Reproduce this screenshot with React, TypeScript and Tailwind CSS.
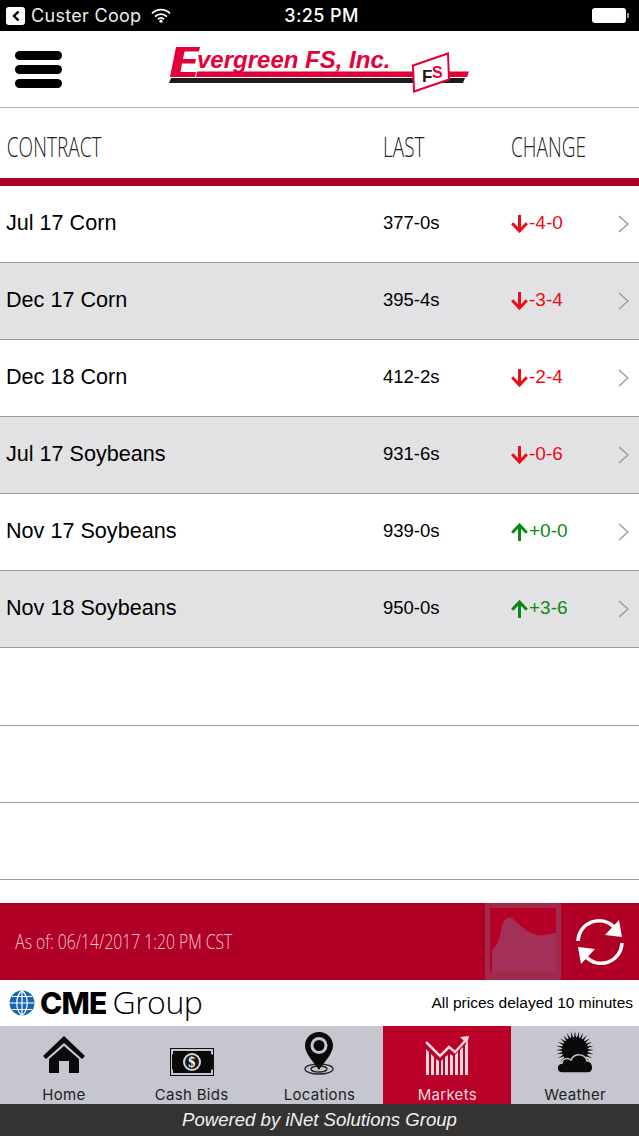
const rows = [
  { name: 'Jul 17 Corn', last: '377-0s', change: '-4-0', up: false },
  { name: 'Dec 17 Corn', last: '395-4s', change: '-3-4', up: false },
  { name: 'Dec 18 Corn', last: '412-2s', change: '-2-4', up: false },
  { name: 'Jul 17 Soybeans', last: '931-6s', change: '-0-6', up: false },
  { name: 'Nov 17 Soybeans', last: '939-0s', change: '+0-0', up: true },
  { name: 'Nov 18 Soybeans', last: '950-0s', change: '+3-6', up: true }
];

const StatusBar = () => (
  <div className="flex h-[31px] items-center justify-between bg-black pl-[6px] pr-[10px] font-['Inter',sans-serif] text-white">
    <div className="flex w-[200px] items-center">
      <div className="flex h-[18px] w-[19px] items-center justify-center rounded-[3px] bg-white">
        <svg width="10" height="12" viewBox="0 0 10 12">
          <path d="M7.5 1.5 3 6l4.500 4.500" fill="none" stroke="#000" strokeWidth="2.400" />
        </svg>
      </div>
      <span className="ml-[6px] text-[18px] font-normal tracking-[0.3px] text-[#ececec]">Custer Coop</span>
      <svg className="ml-[10px]" width="20" height="15" viewBox="0 0 20 15">
        <path d="M1 5.500a12.500 12.500 0 0 1 18 0M4 8.600a8.300 8.300 0 0 1 12 0M7 11.300a4 4 0 0 1 6 0" fill="none" stroke="#fff" strokeWidth="1.800" />
        <circle cx="10" cy="13.200" r="1.600" fill="#fff" />
      </svg>
    </div>
    <span className="pl-[8px] text-[18px] font-medium tracking-[0.4px]">3:25 PM</span>
    <div className="flex w-[200px] items-center justify-end">
      <div className="h-[15px] w-[34px] rounded-[3px] bg-white" />
      <div className="ml-[1px] h-[5px] w-[2px] bg-[#999]" />
    </div>
  </div>
);

const Logo = () => (
  <svg width="304" height="50" viewBox="0 0 304 50">
    <path d="M3 34h294l-2 5H1z" fill="#1c1c1c" />
    <path d="M29 27.500h272l-2 5.500H28z" fill="#e4003a" />
    <path d="M8 3h24l-1 4.500H16.500L15 15h13l-1 4.500H14L12.500 28H28l-1 5H2z" fill="#e4003a" />
    <text x="29" y="23.500" fontFamily="'Liberation Sans',sans-serif" fontWeight="700" fontStyle="italic" fontSize="24" fill="#e4003a">
      vergreen FS, Inc.
    </text>
    <path d="m245 21.500 35-12 1 26-35 12z" fill="#fff" stroke="#e4003a" strokeWidth="2" />
    <text x="254" y="38" fontFamily="'Liberation Sans',sans-serif" fontWeight="700" fontSize="17" fill="#1c1c1c">F</text>
    <text x="264" y="33.500" fontFamily="'Liberation Sans',sans-serif" fontWeight="700" fontSize="16" fill="#e4003a">S</text>
  </svg>
);

const Arrow = ({ up }: { up: boolean }) => (
  <svg className="mr-[1px]" width="17" height="18" viewBox="0 0 17 18">
    {up ? (
      <path d="M8.500 18V2M1.200 9.800l7.300-7.800 7.300 7.800" fill="none" stroke="#0b8a12" strokeWidth="3" />
    ) : (
      <path d="M8.500 0v16M1.200 8.200l7.300 7.800 7.300-7.800" fill="none" stroke="#ee0a16" strokeWidth="3" />
    )}
  </svg>
);

const Row = ({ name, last, change, up, shaded }: { name: string; last: string; change: string; up: boolean; shaded: boolean }) => (
  <div className={`grid h-[77px] grid-cols-[383px_128px_1fr] items-center border-b border-[#9a9a9a] pb-[1px] font-['Liberation_Sans',sans-serif] text-black ${shaded ? 'bg-[#e2e2e4]' : 'bg-white'}`}>
    <span className="pl-[6px] text-[21.600px]">{name}</span>
    <span className="pb-[1px] text-[18.500px]">{last}</span>
    <div className="flex items-center">
      <Arrow up={up} />
      <span className={`w-[89px] pb-[1px] text-[19px] ${up ? 'text-[#0b8a12]' : 'text-[#ee0a16]'}`}>{change}</span>
      <svg width="11" height="18" viewBox="0 0 11 18">
        <path d="m1 1 9 8-9 8" fill="none" stroke="#9b9b9b" strokeWidth="1.500" />
      </svg>
    </div>
  </div>
);

const HomeIcon = () => (
  <svg width="44" height="40" viewBox="0 0 44 40">
    <path d="M22 1 1 21l3 3L22 8l18 16 3-3z" fill="#0a0a0a" />
    <path d="M22 11 7 24v14h10V26h10v12h10V24z" fill="#0a0a0a" />
  </svg>
);

const CashIcon = () => (
  <svg width="44" height="28" viewBox="0 0 44 28">
    <rect x="0.500" y="0.500" width="43" height="27" fill="#c6c6d0" stroke="#111" />
    <path d="M3 3h38v3l2 1v14l-2 1v3H3v-3l-1-1V7l1-1z" fill="#0a0a0a" />
    <circle cx="22" cy="14" r="9" fill="#d4d4da" />
    <circle cx="22" cy="14" r="7" fill="#1a1a1a" />
    <text x="22" y="19" textAnchor="middle" fontFamily="'Liberation Serif',serif" fontWeight="700" fontSize="14" fill="#fff">$</text>
  </svg>
);

const PinIcon = () => (
  <svg width="36" height="44" viewBox="0 0 36 44">
    <ellipse cx="18" cy="38" rx="14" ry="5" fill="none" stroke="#222" strokeWidth="1.300" />
    <ellipse cx="18" cy="38" rx="8" ry="3" fill="none" stroke="#222" strokeWidth="1.300" />
    <path d="M18 1C9.500 1 4 7.500 4 14.500 4 23 13 31 18 39c5-8 14-16 14-24.500C32 7.500 26.500 1 18 1z" fill="#0a0a0a" />
    <circle cx="18" cy="14.500" r="8.500" fill="#c6c6d0" />
    <circle cx="18" cy="14.500" r="5.500" fill="#0a0a0a" />
  </svg>
);

const MarketsIcon = () => (
  <svg width="44" height="40" viewBox="0 0 44 40">
    <path d="M1 13l3 3v23H1zM6 18l3 3v18H6zM11 23l3 2v14h-3zM16 25l2-2v16h-2zM20 21l3-2v20h-3zM25 18l3 2v19h-3zM30 19l3-3v23h-3zM35 14l3-3v28h-3zM40 9l3-3v33h-3z" fill="#f4d7dc" />
    <path d="m1 6 14 14 9-9 6 5L41 4" fill="none" stroke="#f4d7dc" strokeWidth="2.500" />
    <path d="m35 1 9-1-2 8z" fill="#f4d7dc" />
  </svg>
);

const sunRays = Array.from({ length: 28 }, (_, i) => (i * 360) / 28);

const WeatherIcon = () => (
  <svg width="42" height="44" viewBox="0 0 42 44">
    <circle cx="21" cy="19" r="13" fill="#0a0a0a" />
    {sunRays.map((deg) => (
      <path key={deg} d="M19.800 8 21 0l1.200 8z" fill="#0a0a0a" transform={`rotate(${deg} 21 19)`} />
    ))}
    <path d="M8 42c-6 0-7-9 0-10 0-4 5-6 9-3 3-7 14-7 16 1 7 0 8 12 1 12z" fill="#0a0a0a" stroke="#c6c6d0" strokeWidth="1.500" />
  </svg>
);

const RefreshIcon = () => (
  <svg width="48" height="48" viewBox="0 0 48 48">
    <path d="M2 23A21 21 0 0 1 38 9" fill="none" stroke="#fff" strokeWidth="3.500" />
    <path d="M46 25A21 21 0 0 1 10 39" fill="none" stroke="#fff" strokeWidth="3.500" />
    <path d="m43 2 3 17-17-2zM5 46 2 29l17 2z" fill="#fff" />
  </svg>
);

const tabs = [
  { label: 'Home', icon: <HomeIcon />, pad: 'pt-[9px]' },
  { label: 'Cash Bids', icon: <CashIcon />, pad: 'pt-[22px]' },
  { label: 'Locations', icon: <PinIcon />, pad: 'pt-[5px]' },
  { label: 'Markets', icon: <MarketsIcon />, pad: 'pt-[10px]', active: true },
  { label: 'Weather', icon: <WeatherIcon />, pad: 'pt-[5px]' }
];

const App = () => {
  return (
    <div className="flex h-[1136px] w-[639px] flex-col overflow-hidden bg-white">
      <StatusBar />
      <div className="relative flex h-[77px] items-center border-b border-[#b4b4b4] pl-[15px]">
        <div className="flex w-[153px] flex-col gap-[5px]">
          <div className="h-[9px] w-[47px] rounded-full bg-black" />
          <div className="h-[9px] w-[47px] rounded-full bg-black" />
          <div className="h-[9px] w-[47px] rounded-full bg-black" />
        </div>
        <Logo />
      </div>
      <div className="grid h-[70px] grid-cols-[383px_128px_1fr] items-center pt-[5px] font-['Open_Sans',sans-serif] text-[28px] font-light text-[#222]">
        <span className="origin-left scale-x-[0.68] whitespace-nowrap pl-[10px]">CONTRACT</span>
        <span className="origin-left scale-x-[0.68] whitespace-nowrap">LAST</span>
        <span className="origin-left scale-x-[0.68] whitespace-nowrap">CHANGE</span>
      </div>
      <div className="h-[8px] bg-[#a80024]" />
      {rows.map((row, i) => (
        <Row key={row.name} {...row} shaded={i % 2 === 1} />
      ))}
      <div className="h-[78px] border-b border-[#9a9a9a]" />
      <div className="h-[77px] border-b border-[#9a9a9a]" />
      <div className="h-[77px] border-b border-[#9a9a9a]" />
      <div className="h-[23px]" />
      <div className="flex h-[77px] items-center bg-[#b00026]">
        <span className="w-[485px] origin-left scale-x-[0.805] whitespace-nowrap pl-[19px] font-['Open_Sans',sans-serif] text-[19.500px] font-light text-[#f3c5ce]">
          As of: 06/14/2017 1:20 PM CST
        </span>
        <div className="h-[77px] w-[76px] border-[5px] border-b-[8px] border-[#a0294c] bg-[#b50028]">
          <svg width="66" height="64" viewBox="0 0 66 64">
            <path d="M2 64V42c5-4 8-12 10-24 2-8 8-11 13-5 7 6 13 12 22 14 7 2 12-2 19-2v39z" fill="#a23058" />
          </svg>
        </div>
        <div className="ml-[15px]">
          <RefreshIcon />
        </div>
      </div>
      <div className="flex h-[46px] items-center justify-between pl-[9px] pr-[6px] text-black">
        <div className="flex items-center">
          <svg width="26" height="26" viewBox="0 0 26 26">
            <circle cx="13" cy="13" r="12.500" fill="#1667b0" />
            <path d="M0.500 13h25M3 6.500h20M3 19.500h20M13 0.500v25M13 0.500c-7 6-7 19 0 25M13 0.500c7 6 7 19 0 25" fill="none" stroke="#fff" strokeWidth="1.200" />
          </svg>
          <span className="ml-[5px] font-['Inter',sans-serif] text-[30px] font-extrabold tracking-[-0.8px]">CME</span>
          <span className="mb-[3px] ml-[6px] font-['Open_Sans',sans-serif] text-[32px] font-light tracking-[-0.5px]">Group</span>
        </div>
        <span className="font-['Liberation_Sans',sans-serif] text-[15.500px]">All prices delayed 10 minutes</span>
      </div>
      <div className="grid h-[78px] grid-cols-5 bg-[#c6c6d0] font-['Inter',sans-serif] text-[15px] tracking-[0.3px]">
        {tabs.map((tab) => (
          <div key={tab.label} className={`relative flex flex-col items-center ${tab.pad} ${tab.active ? 'bg-[#b80028] text-[#f4d7dc]' : 'text-[#222]'}`}>
            {tab.icon}
            <span className="absolute bottom-0 leading-[19px]">{tab.label}</span>
          </div>
        ))}
      </div>
      <div className="flex h-[32px] items-center justify-center bg-[#333] font-['Liberation_Sans',sans-serif] text-[18.600px] italic text-[#f0f0f0]">
        Powered by iNet Solutions Group
      </div>
    </div>
  );
};

export default App;
